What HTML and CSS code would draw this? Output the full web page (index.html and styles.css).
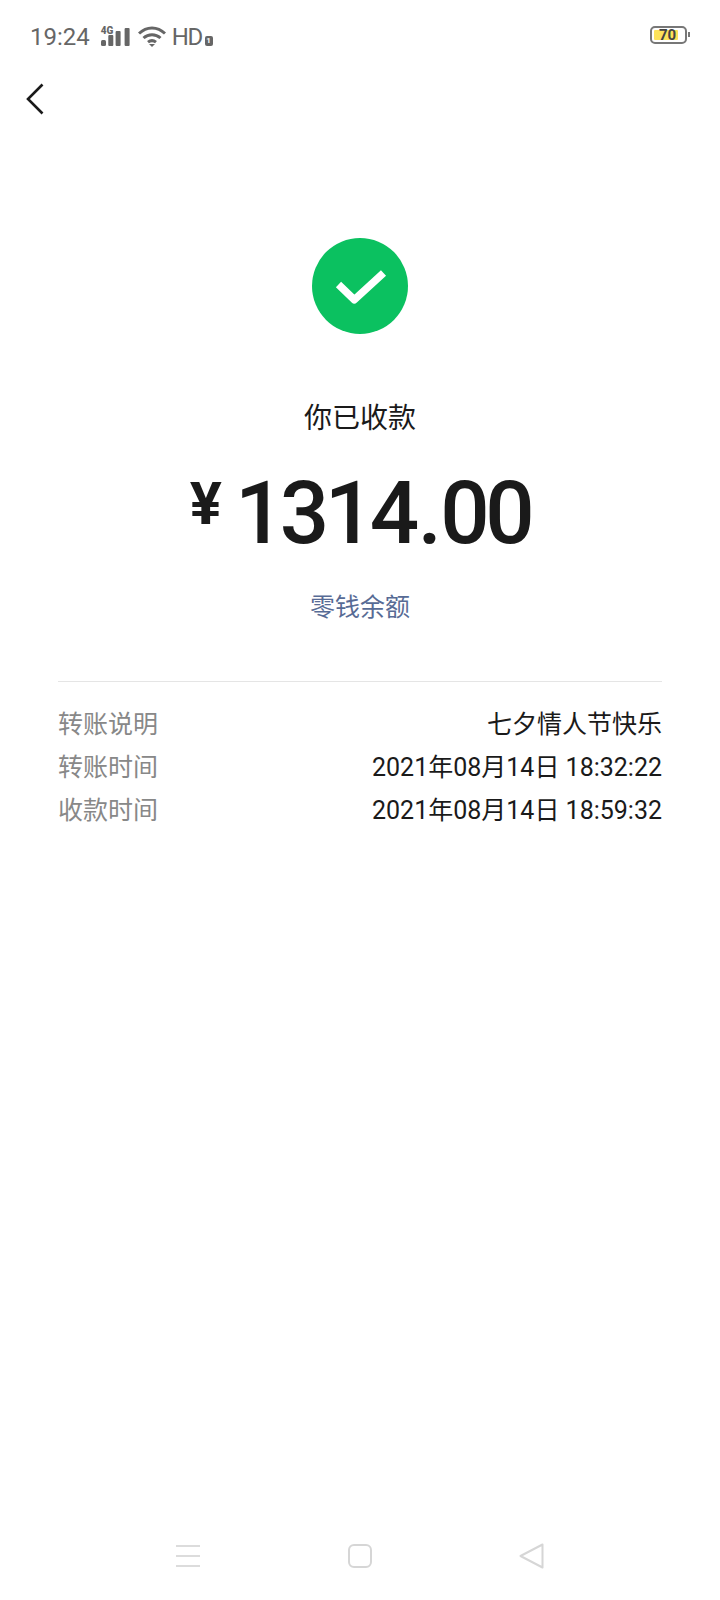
FILE: index.html
```html
<!DOCTYPE html>
<html lang="zh-CN">

<head>
  <meta charset="UTF-8">
  <meta name="viewport" content="width=device-width, initial-scale=1.0">
  <title>收款详情</title>
  <link rel="stylesheet" href="styles.css">
</head>

<body>
  <div class="page">
    <div class="status-bar">
      <span class="time">19:24</span>
      <div class="signal">
        <span class="signal-label">4G</span>
        <svg class="signal-bars" width="29" height="18" viewBox="0 0 29 18">
          <rect x="0" y="12" width="5" height="6" rx="1.5" />
          <rect x="7.3" y="7" width="5" height="11" rx="1" />
          <rect x="14.6" y="3" width="5" height="15" rx="1" />
          <rect x="23.6" y="0" width="5" height="18" rx="1" />
        </svg>
      </div>
      <svg class="wifi" width="28" height="21" viewBox="0 0 28 21" fill="none" stroke="#666" stroke-width="3">
        <path d="M1 7.5C8.5 0 19.5 0 27 7.5" />
        <path d="M5.5 12C10.5 7.5 17.5 7.5 22.5 12" />
        <path d="M10 16.2C12.5 14.2 15.5 14.2 18 16.2" />
        <path d="M14 21l-3-3h6z" fill="#666" stroke="none" />
      </svg>
      <span class="hd">HD</span>
      <span class="sim">1</span>
      <div class="battery">
        <div class="battery-level"></div>
        <span class="battery-text">70</span>
      </div>
    </div>

    <div class="top-bar">
      <svg width="18" height="32" viewBox="0 0 18 32" fill="none" stroke="#1a1a1a" stroke-width="2.6">
        <path d="M16.5 1.5L2 16l14.5 14.5" />
      </svg>
    </div>

    <div class="result">
      <svg class="check" width="96" height="96" viewBox="0 0 96 96">
        <circle cx="48" cy="48" r="48" fill="#0bc160" />
        <path d="M26.5 46.5L42.3 61.8L71.5 35" fill="none" stroke="#fff" stroke-width="7.5" stroke-linejoin="round" />
      </svg>
      <div class="title">你已收款</div>
      <div class="amount"><span class="yen">¥</span>1314<span class="dot">.</span>00</div>
      <div class="balance">零钱余额</div>
    </div>

    <div class="details">
      <div class="row">
        <span class="row-label">转账说明</span>
        <span class="row-value">七夕情人节快乐</span>
      </div>
      <div class="row">
        <span class="row-label">转账时间</span>
        <span class="row-value">2021年08月14日 18:32:22</span>
      </div>
      <div class="row">
        <span class="row-label">收款时间</span>
        <span class="row-value">2021年08月14日 18:59:32</span>
      </div>
    </div>

    <div class="nav-bar">
      <svg width="24" height="22" viewBox="0 0 24 22" stroke="#dcdcdc" stroke-width="2">
        <path d="M0 1h24M0 11h24M0 21h24" />
      </svg>
      <svg width="24" height="24" viewBox="0 0 24 24" fill="none" stroke="#d6d6d6" stroke-width="2">
        <rect x="1" y="1" width="22" height="22" rx="5" />
      </svg>
      <svg width="25" height="26" viewBox="0 0 25 26" fill="none" stroke="#d6d6d6" stroke-width="2" stroke-linejoin="round">
        <path d="M23.5 1.5L1.5 13l22 11.5z" />
      </svg>
    </div>
  </div>
</body>

</html>
```

FILE: styles.css
```css
body {
  font-family: Roboto, "Noto Sans CJK SC", sans-serif;
  margin: 0;
  background: #fff;
  color: #1a1a1a;
}

.page {
  display: flex;
  flex-direction: column;
  height: 1600px;
  overflow: hidden;
}

.status-bar {
  display: flex;
  align-items: center;
  box-sizing: border-box;
  height: 72px;
  padding: 1px 33px 0 30px;
  color: #666;
}

.time {
  font-size: 24px;
  margin-right: 11px;
}

.signal {
  position: relative;
  width: 29px;
  height: 18px;
  margin-right: 8px;
}

.signal-label {
  position: absolute;
  left: 0;
  top: -1px;
  font-size: 10px;
  font-weight: 900;
  line-height: 8px;
}

.signal-bars {
  display: block;
  fill: #666;
}

.wifi {
  margin-right: 6px;
}

.hd {
  font-size: 24px;
  letter-spacing: -1.5px;
}

.sim {
  width: 8px;
  height: 10px;
  margin: 8px 0 0 3px;
  border-radius: 2px;
  background: #666;
  color: #fff;
  font-size: 8px;
  font-weight: 700;
  line-height: 10px;
  text-align: center;
}

.battery {
  position: relative;
  width: 33px;
  height: 14px;
  margin: -3px 0 0 auto;
  border: 2px solid #777;
  border-radius: 5px;
}

.battery::after {
  content: "";
  position: absolute;
  right: -5px;
  top: 4px;
  width: 2px;
  height: 5px;
  background: #777;
}

.battery-level {
  width: 24px;
  height: 10px;
  margin: 2px;
  border-radius: 1px;
  background: #fde35a;
}

.battery-text {
  position: absolute;
  left: 7px;
  top: 0;
  color: #444;
  font-size: 15px;
  font-weight: 700;
  line-height: 14px;
}

.top-bar {
  height: 54px;
  padding-left: 26px;
}

.top-bar svg {
  display: block;
  margin-top: 11px;
}

.result {
  display: flex;
  flex-direction: column;
  align-items: center;
  padding-top: 112px;
}

.check {
  display: block;
}

.title {
  margin-top: 65px;
  font-size: 28px;
  line-height: 40px;
}

.amount {
  display: flex;
  align-items: flex-start;
  margin-top: 23px;
  font-size: 87px;
  font-weight: 500;
  letter-spacing: -4.5px;
  line-height: 102px;
}

.yen {
  margin: 12px 13px 0 0;
  font-size: 60px;
  font-weight: 700;
  letter-spacing: 0;
  line-height: 60px;
}

.dot {
  margin: 0 3px;
}

.balance {
  margin-top: 26px;
  color: #576b95;
  font-size: 25px;
  line-height: 36px;
}

.details {
  margin: 55px 58px 0;
  padding-top: 21px;
  border-top: 1px solid #e5e5e5;
}

.row {
  display: flex;
  justify-content: space-between;
  height: 43px;
  font-size: 25px;
  line-height: 43px;
}

.row-label {
  color: #888;
}

.nav-bar {
  display: flex;
  justify-content: space-between;
  align-items: center;
  margin: auto 176px 31px;
}

.nav-bar svg {
  display: block;
}
```
